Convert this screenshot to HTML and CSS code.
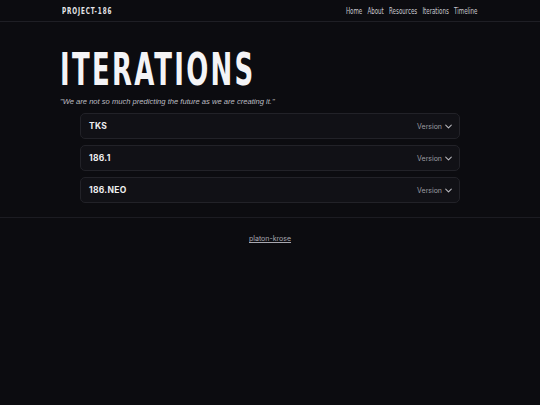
FILE: index.html
```html
<!DOCTYPE html>
<html>
<head>
<meta charset="utf-8">
<link rel="stylesheet" href="styles.css">
</head>
<body>
<header class="nav">
  <div class="nav-inner">
    <a class="logo" href="#">PROJECT-186</a>
    <nav class="links">
      <a href="#">Home</a>
      <a href="#">About</a>
      <a href="#">Resources</a>
      <a href="#">Iterations</a>
      <a href="#">Timeline</a>
    </nav>
  </div>
</header>
<main class="main">
  <h1 class="title">ITERATIONS</h1>
  <p class="quote">"We are not so much predicting the future as we are creating it."</p>
  <div class="list">
    <div class="card"><span class="name">TKS</span><span class="ver">Version <svg class="chev" viewBox="0 0 10 6" width="7" height="5"><path d="M1 1l4 4 4-4" fill="none" stroke="currentColor" stroke-width="1.5" stroke-linecap="round" stroke-linejoin="round"/></svg></span></div>
    <div class="card"><span class="name">186.1</span><span class="ver">Version <svg class="chev" viewBox="0 0 10 6" width="7" height="5"><path d="M1 1l4 4 4-4" fill="none" stroke="currentColor" stroke-width="1.5" stroke-linecap="round" stroke-linejoin="round"/></svg></span></div>
    <div class="card"><span class="name">186.NEO</span><span class="ver">Version <svg class="chev" viewBox="0 0 10 6" width="7" height="5"><path d="M1 1l4 4 4-4" fill="none" stroke="currentColor" stroke-width="1.5" stroke-linecap="round" stroke-linejoin="round"/></svg></span></div>
  </div>
</main>
<footer class="footer">
  <a href="#">platon-krose</a>
</footer>
</body>
</html>
```
FILE: styles.css
```css
html, body {
  margin: 0;
  padding: 0;
  background: #0c0c10;
  color: #f2f2f4;
}
body {
  font-family: Inter, "Liberation Sans", sans-serif;
  min-height: 405px;
}
a { color: inherit; text-decoration: none; }

.nav {
  border-bottom: 1px solid #1f1f25;
  height: 21px;
}
.nav-inner {
  width: 416px;
  margin: 0 auto;
  height: 21px;
  display: flex;
  align-items: center;
  justify-content: space-between;
}
.logo {
  font-family: "DejaVu Sans Condensed", sans-serif;
  font-weight: 700;
  font-size: 8.5px;
  letter-spacing: 1.2px;
  color: #e6e6ea;
  display: inline-block;
  transform: scaleX(0.74);
  transform-origin: left center;
}
.links {
  display: flex;
  gap: 7px;
  transform: scaleX(0.75);
  transform-origin: right center;
}
.links a {
  font-family: "DejaVu Sans Condensed", sans-serif;
  font-size: 8.2px;
  color: #cacad0;
}

.main {
  width: 420px;
  margin: 0 auto;
  padding-top: 24px;
}
.title {
  margin: 0;
  font-family: "DejaVu Sans Condensed", sans-serif;
  font-weight: 700;
  font-size: 44px;
  line-height: 48px;
  letter-spacing: 3.5px;
  color: #f4f4f6;
  transform: scaleX(0.655);
  transform-origin: left center;
}
.quote {
  margin: 3px 0 7px;
  font-family: "Liberation Sans", sans-serif;
  font-style: italic;
  font-size: 7.6px;
  color: #bcbcc2;
}
.list {
  width: 380px;
  margin: 0 auto;
  display: flex;
  flex-direction: column;
  gap: 6px;
}
.card {
  height: 24px;
  border: 1px solid #222228;
  border-radius: 5px;
  background: #111116;
  display: flex;
  align-items: center;
  justify-content: space-between;
  padding: 0 7px 0 8px;
}
.name {
  font-weight: 700;
  font-size: 8.5px;
  letter-spacing: 0.3px;
  color: #eeeef0;
}
.ver {
  font-size: 7px;
  color: #9c9ca2;
  display: flex;
  align-items: center;
  gap: 3px;
}
.chev { color: #b8b8be; }

.footer {
  margin-top: 14px;
  border-top: 1px solid #1c1c22;
  padding-top: 7px;
  text-align: center;
}
.footer a {
  font-size: 7px;
  color: #a8a8b0;
  text-decoration: underline;
}
```
